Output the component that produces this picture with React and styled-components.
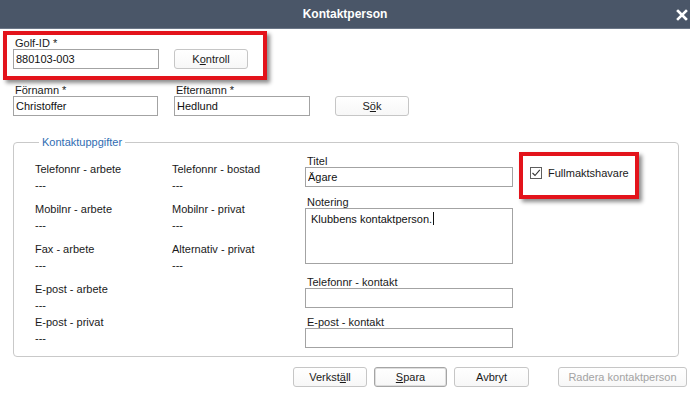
import styled, { createGlobalStyle } from "styled-components";

const GlobalStyle = createGlobalStyle`
  html, body {
    margin: 0;
    padding: 0;
    background: #ffffff;
  }
  body {
    font-family: "Liberation Sans", Arial, sans-serif;
    font-size: 11px;
    color: #1a1a1a;
  }
`;

const Dialog = styled.div`
  width: 690px;
  height: 394px;
  background: #ffffff;
  overflow: hidden;
`;

const TitleBar = styled.div`
  position: relative;
  height: 29px;
  background: #4a5668;
  border-bottom: 1px solid #6b7687;
  box-sizing: border-box;
  display: flex;
  align-items: center;
  justify-content: center;
  color: #ffffff;
  font-size: 12px;
  font-weight: 700;
`;

const CloseButton = styled.span`
  position: absolute;
  right: 2px;
  top: 9px;
  width: 12px;
  height: 12px;
  display: flex;
`;

const Highlight = styled.div`
  box-sizing: border-box;
  border: 4px solid #e3131b;
  box-shadow: 3px 3px 4px rgba(0, 0, 0, 0.45);
`;

const GolfBox = styled(Highlight)`
  width: 264px;
  margin: 2px 0 0 3px;
  padding: 2px 6px 7px;
  display: flex;
  align-items: flex-end;
`;

const NameRow = styled.div`
  display: flex;
  align-items: flex-end;
  margin-top: 4px;
  padding-left: 13px;
`;

const Field = styled.div`
  display: flex;
  flex-direction: column;
  width: ${(p) => p.$w}px;
  margin-left: ${(p) => p.$ml || 0}px;
  margin-top: ${(p) => p.$mt || 0}px;
`;

const FieldLabel = styled.label`
  line-height: 12px;
  padding-left: 2px;
  color: #1a1a1a;
`;

const TextInput = styled.input`
  box-sizing: border-box;
  width: 100%;
  height: 20px;
  margin: 0;
  padding: 0 2px;
  border: 1px solid #a3a3a3;
  background: #ffffff;
  font-family: inherit;
  font-size: 11px;
  color: #111;
  outline: none;
`;

const NoteBox = styled.div`
  box-sizing: border-box;
  width: 100%;
  height: 56px;
  padding: 3px 2px 0 5px;
  border: 1px solid #a3a3a3;
  line-height: 14px;
  color: #111;
`;

const Caret = styled.span`
  display: inline-block;
  width: 1px;
  height: 13px;
  margin-left: 1px;
  vertical-align: -2px;
  background: #111;
`;

const Button = styled.button`
  box-sizing: border-box;
  width: ${(p) => p.$w || 74}px;
  height: 20px;
  margin: 0 0 0 ${(p) => p.$ml || 0}px;
  padding: 0;
  border: 1px solid ${(p) => (p.$default ? "#a5a5a5" : "#c6c6c6")};
  border-radius: 3px;
  background: linear-gradient(#ffffff, #f7f7f7);
  box-shadow: ${(p) => (p.$default ? "inset 0 0 0 1px #dedede" : "none")};
  font-family: inherit;
  font-size: 11px;
  color: ${(p) => (p.disabled ? "#a3a3a3" : "#1a1a1a")};
  u {
    text-underline-offset: 1px;
  }
`;

const Group = styled.fieldset`
  margin: 20px 11px 0 13px;
  padding: 6px 0 8px 21px;
  border: 1px solid #c9c9c9;
  border-radius: 4px;
  display: flex;
  align-items: flex-start;
`;

const Legend = styled.legend`
  margin-left: 4px;
  padding: 0 3px;
  line-height: 13px;
  color: #2f6db3;
`;

const InfoGrid = styled.div`
  display: grid;
  grid-template-columns: 137px 133px;
  padding-top: 8px;
`;

const InfoItem = styled.div`
  display: flex;
  flex-direction: column;
  gap: 3px;
  line-height: 13px;
  margin-bottom: ${(p) => (p.$compact ? 4 : 11)}px;
  &:last-child {
    margin-bottom: 0;
  }
`;

const RightColumn = styled.div`
  width: 208px;
  display: flex;
  flex-direction: column;
`;

const CheckBox = styled(Highlight)`
  margin: -3px 0 0 6px;
  padding: 11px 6px 16px 7px;
  display: flex;
  align-items: center;
  gap: 6px;
`;

const Box = styled.span`
  box-sizing: border-box;
  width: 12px;
  height: 12px;
  border: 1px solid #5e5e5e;
  background: #fff;
  display: flex;
  align-items: center;
  justify-content: center;
`;

const Footer = styled.div`
  display: flex;
  justify-content: flex-end;
  gap: 7px;
  margin-top: 10px;
  padding-right: 3px;
`;

const info = [
  { label: "Telefonnr - arbete" },
  { label: "Telefonnr - bostad" },
  { label: "Mobilnr - arbete" },
  { label: "Mobilnr - privat" },
  { label: "Fax - arbete" },
  { label: "Alternativ - privat" },
  { label: "E-post - arbete", compact: true },
  { label: null },
  { label: "E-post - privat" },
];

export default function App() {
  return (
    <>
      <GlobalStyle />
      <Dialog>
        <TitleBar>
          Kontaktperson
          <CloseButton>
            <svg width="12" height="12" viewBox="0 0 12 12">
              <path d="M2 2 L10 10 M10 2 L2 10" stroke="#fff" strokeWidth="2.6" strokeLinecap="square" />
            </svg>
          </CloseButton>
        </TitleBar>

        <GolfBox>
          <Field $w={146}>
            <FieldLabel>Golf-ID *</FieldLabel>
            <TextInput defaultValue="880103-003" readOnly />
          </Field>
          <Button $ml={15}>
            K<u>o</u>ntroll
          </Button>
        </GolfBox>

        <NameRow>
          <Field $w={145}>
            <FieldLabel>Förnamn *</FieldLabel>
            <TextInput defaultValue="Christoffer" readOnly />
          </Field>
          <Field $w={136} $ml={16}>
            <FieldLabel>Efternamn *</FieldLabel>
            <TextInput defaultValue="Hedlund" readOnly />
          </Field>
          <Button $ml={25}>
            S<u>ö</u>k
          </Button>
        </NameRow>

        <Group>
          <Legend>Kontaktuppgifter</Legend>
          <InfoGrid>
            {info.map((item, i) =>
              item.label ? (
                <InfoItem key={i} $compact={item.compact}>
                  <span>{item.label}</span>
                  <span>---</span>
                </InfoItem>
              ) : (
                <span key={i} />
              )
            )}
          </InfoGrid>

          <RightColumn>
            <Field $w={208}>
              <FieldLabel>Titel</FieldLabel>
              <TextInput defaultValue="Ägare" readOnly />
            </Field>
            <Field $w={208} $mt={9}>
              <FieldLabel>Notering</FieldLabel>
              <NoteBox>
                Klubbens kontaktperson.
                <Caret />
              </NoteBox>
            </Field>
            <Field $w={208} $mt={12}>
              <FieldLabel>Telefonnr - kontakt</FieldLabel>
              <TextInput readOnly />
            </Field>
            <Field $w={208} $mt={8}>
              <FieldLabel>E-post - kontakt</FieldLabel>
              <TextInput readOnly />
            </Field>
          </RightColumn>

          <CheckBox>
            <Box>
              <svg width="10" height="10" viewBox="0 0 10 10">
                <path d="M1.5 5 L4 7.5 L8.8 1.8" fill="none" stroke="#333" strokeWidth="1.1" />
              </svg>
            </Box>
            <span>Fullmaktshavare</span>
          </CheckBox>
        </Group>

        <Footer>
          <Button>
            Verkst<u>ä</u>ll
          </Button>
          <Button $w={73} $default>
            <u>S</u>para
          </Button>
          <Button $w={75}>Avbryt</Button>
          <Button $w={129} $ml={22} disabled>
            Radera kontaktperson
          </Button>
        </Footer>
      </Dialog>
    </>
  );
}
